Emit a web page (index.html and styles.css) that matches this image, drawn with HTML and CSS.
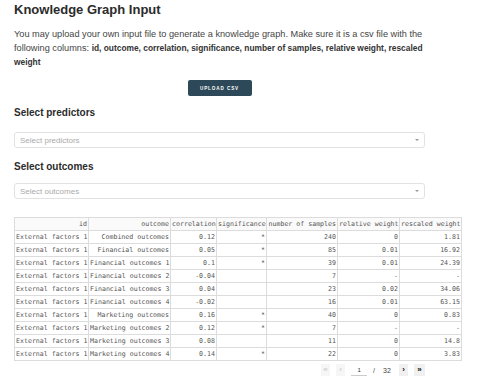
FILE: index.html
```html
<!DOCTYPE html>
<html lang="en">
<head>
  <meta charset="UTF-8">
  <meta name="viewport" content="width=device-width, initial-scale=1.0">
  <title>Knowledge Graph Input</title>

  <link rel="stylesheet" href="styles.css">
</head>
<body>
  <div class="container">
    <h1 class="title">Knowledge Graph Input</h1>
    <p class="intro">
      You may upload your own input file to generate a knowledge graph. Make sure it is a csv file with the
      following columns: <b>id, outcome, correlation, significance, number of samples, relative weight, rescaled weight</b>
    </p>

    <div class="upload_row">
      <button class="upload_btn">Upload CSV</button>
    </div>

    <h3 class="section">Select predictors</h3>
    <div class="dropdown">
      <span class="placeholder">Select predictors</span>
      <span class="caret"></span>
    </div>

    <h3 class="section outcomes">Select outcomes</h3>
    <div class="dropdown">
      <span class="placeholder">Select outcomes</span>
      <span class="caret"></span>
    </div>

    <table class="data_table">
      <colgroup>
        <col style="width: 74px">
        <col style="width: 82px">
        <col style="width: 46px">
        <col style="width: 50px">
        <col style="width: 71px">
        <col style="width: 62px">
        <col style="width: 62px">
      </colgroup>
      <thead>
        <tr>
          <th>id</th>
          <th>outcome</th>
          <th>correlation</th>
          <th>significance</th>
          <th>number of samples</th>
          <th>relative weight</th>
          <th>rescaled weight</th>
        </tr>
      </thead>
      <tbody>
        <tr><td>External factors 1</td><td>Combined outcomes</td><td>0.12</td><td>*</td><td>240</td><td>0</td><td>1.81</td></tr>
        <tr><td>External factors 1</td><td>Financial outcomes</td><td>0.05</td><td>*</td><td>85</td><td>0.01</td><td>16.92</td></tr>
        <tr><td>External factors 1</td><td>Financial outcomes 1</td><td>0.1</td><td>*</td><td>39</td><td>0.01</td><td>24.39</td></tr>
        <tr><td>External factors 1</td><td>Financial outcomes 2</td><td>-0.04</td><td></td><td>7</td><td>-</td><td>-</td></tr>
        <tr><td>External factors 1</td><td>Financial outcomes 3</td><td>0.04</td><td></td><td>23</td><td>0.02</td><td>34.06</td></tr>
        <tr><td>External factors 1</td><td>Financial outcomes 4</td><td>-0.02</td><td></td><td>16</td><td>0.01</td><td>63.15</td></tr>
        <tr><td>External factors 1</td><td>Marketing outcomes</td><td>0.16</td><td>*</td><td>40</td><td>0</td><td>0.83</td></tr>
        <tr><td>External factors 1</td><td>Marketing outcomes 2</td><td>0.12</td><td>*</td><td>7</td><td>-</td><td>-</td></tr>
        <tr><td>External factors 1</td><td>Marketing outcomes 3</td><td>0.08</td><td></td><td>11</td><td>0</td><td>14.8</td></tr>
        <tr><td>External factors 1</td><td>Marketing outcomes 4</td><td>0.14</td><td>*</td><td>22</td><td>0</td><td>3.83</td></tr>
      </tbody>
    </table>

    <div class="pager">
      <button class="page_btn disabled">&laquo;</button>
      <button class="page_btn disabled">&lsaquo;</button>
      <span class="page_input">1</span>
      <span class="page_sep">/</span>
      <span class="page_total">32</span>
      <button class="page_btn">&rsaquo;</button>
      <button class="page_btn">&raquo;</button>
    </div>
  </div>
</body>
</html>
```

FILE: styles.css
```css
* {
  box-sizing: border-box;
}

body {
  margin: 0;
  font-family: "Liberation Sans", Arial, Helvetica, sans-serif;
  color: #333;
  background: #fff;
}

.container {
  width: 425px;
  padding: 0 0 0 14px;
}

.title {
  margin: 2px 0 0;
  font-size: 13px;
  line-height: 15px;
  font-weight: bold;
  color: #2b2b2b;
}

.intro {
  width: 415px;
  margin: 10px 0 0;
  font-size: 9.2px;
  line-height: 14px;
  color: #444;
}

.intro b {
  font-size: 8.4px;
  color: #333;
}

.upload_row {
  display: flex;
  justify-content: center;
  margin-top: 11px;
}

.upload_btn {
  width: 64px;
  height: 16px;
  padding: 0;
  border: none;
  border-radius: 2px;
  background: #2d4858;
  color: #fff;
  font-family: "Liberation Sans", Arial, sans-serif;
  font-size: 4.6px;
  font-weight: bold;
  letter-spacing: 0.9px;
  text-transform: uppercase;
}

.section {
  margin: 11px 0 0;
  font-size: 10px;
  line-height: 12px;
  font-weight: bold;
  color: #2b2b2b;
}

.section + .dropdown {
  margin-top: 13px;
}

.dropdown + .section {
  margin-top: 13px;
}

.section.outcomes + .dropdown {
  margin-top: 10px;
}

.dropdown {
  display: flex;
  align-items: center;
  justify-content: space-between;
  height: 16px;
  padding: 0 5px;
  border: 1px solid #e2e2e2;
  border-radius: 3px;
  background: #fff;
}

.placeholder {
  font-size: 8px;
  color: #aaa;
}

.caret {
  width: 0;
  height: 0;
  border-left: 2px solid transparent;
  border-right: 2px solid transparent;
  border-top: 2.5px solid #999;
}

.data_table {
  margin-top: 18px;
  border-collapse: collapse;
  table-layout: fixed;
  width: 447px;
  font-family: "DejaVu Sans Mono", "Liberation Mono", monospace;
  font-size: 6.6px;
  color: #555;
}

.data_table th,
.data_table td {
  height: 13px;
  padding: 0 1px;
  border: 1px solid #dcdcdc;
  text-align: right;
  white-space: nowrap;
  overflow: hidden;
  font-weight: normal;
}

.data_table th {
  background: #fafafa;
}

.pager {
  display: flex;
  justify-content: flex-end;
  align-items: center;
  gap: 6px;
  width: 411px;
  margin-top: 3px;
  font-family: "Liberation Sans", Arial, sans-serif;
}

.page_btn {
  width: 9px;
  height: 12px;
  padding: 0;
  border: none;
  background: #f0f0f0;
  color: #111;
  font-size: 8px;
  font-weight: bold;
  line-height: 12px;
}

.page_btn.disabled {
  background: #f6f6f6;
  color: #c4c4c4;
  font-weight: normal;
}

.page_btn:last-child {
  width: 11px;
}

.page_input {
  width: 16px;
  height: 12px;
  border-bottom: 1px solid #ccc;
  text-align: center;
  font-size: 6px;
  line-height: 12px;
  color: #333;
}

.page_sep,
.page_total {
  font-size: 7px;
  color: #444;
}

.page_total {
  width: 12px;
  text-align: center;
}
```
